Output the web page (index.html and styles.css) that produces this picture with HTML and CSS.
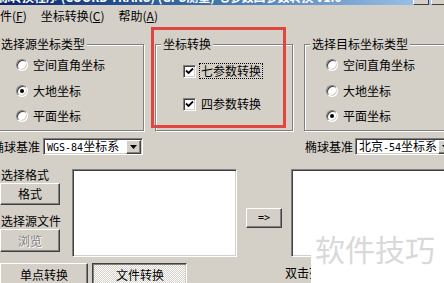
FILE: index.html
```html
<!DOCTYPE html>
<html lang="zh-CN">
<head>
<meta charset="utf-8">
<title>坐标转换</title>
<link rel="stylesheet" href="styles.css">
</head>
<body>
<div class="titlebar">
  <span class="title">坐标转换程序 (COORD TRANS) (GPS测量) 七参数四参数转换 V1.0</span>
  <div class="tbtns"><i></i><i></i></div>
</div>
<div class="menubar">
  <span>文件(<u>F</u>)</span>
  <span>坐标转换(<u>C</u>)</span>
  <span>帮助(<u>A</u>)</span>
</div>
<div class="groups">
  <fieldset class="grp grp-src">
    <legend>选择源坐标类型</legend>
    <div class="opts">
      <div class="opt"><span class="radio"></span><span class="txt">空间直角坐标</span></div>
      <div class="opt"><span class="radio on"></span><span class="txt">大地坐标</span></div>
      <div class="opt"><span class="radio"></span><span class="txt">平面坐标</span></div>
    </div>
  </fieldset>
  <fieldset class="grp grp-mid">
    <legend>坐标转换</legend>
    <div class="checks">
      <div class="chk-row"><span class="check"><svg viewBox="0 0 9 9" width="9" height="9"><path d="M1 3.5 L3.5 6 L8 1.5" fill="none" stroke="#000" stroke-width="1.8"/></svg></span><span class="clabel focus">七参数转换</span></div>
      <div class="chk-row"><span class="check"><svg viewBox="0 0 9 9" width="9" height="9"><path d="M1 3.5 L3.5 6 L8 1.5" fill="none" stroke="#000" stroke-width="1.8"/></svg></span><span class="clabel">四参数转换</span></div>
    </div>
  </fieldset>
  <fieldset class="grp grp-dst">
    <legend>选择目标坐标类型</legend>
    <div class="opts">
      <div class="opt"><span class="radio"></span><span class="txt">空间直角坐标</span></div>
      <div class="opt"><span class="radio"></span><span class="txt">大地坐标</span></div>
      <div class="opt"><span class="radio on"></span><span class="txt">平面坐标</span></div>
    </div>
  </fieldset>
</div>
<div class="highlight"></div>
<div class="ell">
  <span class="ell-lbl ell-lbl-l">椭球基准</span>
  <div class="combo"><span class="ctext"><span class="mono">WGS-84</span>坐标系</span><span class="cbtn"><svg viewBox="0 0 7 4" width="7" height="4"><path d="M0 0H7L3.5 4Z" fill="#000"/></svg></span></div>
  <span class="ell-lbl ell-lbl-r">椭球基准</span>
  <div class="combo combo-r"><span class="ctext">北京<span class="mono">-54</span>坐标系</span><span class="cbtn"><svg viewBox="0 0 7 4" width="7" height="4"><path d="M0 0H7L3.5 4Z" fill="#000"/></svg></span></div>
</div>
<div class="files">
  <div class="leftcol">
    <span class="lbl lbl-fmt">选择格式</span>
    <div class="btn btn-fmt">格式</div>
    <span class="lbl lbl-src">选择源文件</span>
    <div class="btn btn-browse disabled">浏览</div>
  </div>
  <div class="listbox list-l"></div>
  <div class="btn btn-arrow"><span class="mono">=&gt;</span></div>
  <div class="listbox list-r"></div>
</div>
<div class="bottom">
  <div class="btn btn-single">单点转换</div>
  <div class="btn btn-file pressed">文件转换</div>
  <span class="hint">双击列表查看文件</span>
</div>
<div class="watermark">软件技巧</div>
</body>
</html>
```
FILE: styles.css
```css
* { box-sizing: border-box; }
html, body { margin: 0; padding: 0; }
body {
  width: 444px;
  height: 283px;
  overflow: hidden;
  position: relative;
  background: #d4d0c8;
  color: #000;
  font-family: "Noto Sans CJK SC", "Noto Sans", sans-serif;
  font-size: 12px;
  line-height: 14px;
}
.mono { font-family: "DejaVu Sans Mono", monospace; font-size: 10px; }

/* title bar */
.titlebar {
  height: 5px;
  display: flex;
  overflow: hidden;
  background: linear-gradient(to right, #0a246a 0%, #3a6ea5 45%, #a6caf0 100%);
}
.title {
  color: #fff;
  font-weight: bold;
  white-space: nowrap;
  margin-top: -10px;
  margin-left: -14px;
}
.tbtns { margin-left: auto; display: flex; gap: 2px; margin-right: -3px; }
.tbtns i {
  width: 16px;
  height: 5px;
  background: #d4d0c8;
  border-left: 1px solid #fff;
  border-right: 1px solid #404040;
  border-bottom: 1px solid #404040;
}

/* menu */
.menubar {
  height: 20px;
  display: flex;
  gap: 14px;
  margin-left: -12px;
  padding-top: 4px;
  white-space: nowrap;
}
.menubar u { text-decoration: underline; text-underline-offset: 1px; }

/* group boxes */
.groups {
  display: flex;
  gap: 11px;
  margin-left: -7px;
  padding-top: 12px;
  white-space: nowrap;
}
.grp {
  margin: 0;
  padding: 0;
  min-width: 0;
  height: 94px;
  border: 1px solid #808080;
  box-shadow: inset 1px 1px 0 #fff, 1px 1px 0 #fff;
}
.grp legend {
  margin-left: 5px;
  padding: 0 2px;
  line-height: 14px;
  background: #d4d0c8;
}
.grp-src { width: 151px; flex: none; }
.grp-mid { width: 138px; flex: none; }
.grp-dst { width: 160px; flex: none; }

.opts {
  display: flex;
  flex-direction: column;
  gap: 11.5px;
  padding-top: 7px;
}
.grp-src .opts { padding-left: 22px; }
.grp-dst .opts { padding-left: 21px; }
.opt { display: flex; align-items: center; height: 14px; }
.radio {
  width: 12px;
  height: 12px;
  flex: none;
  border-radius: 50%;
  background: #fff;
  border: 1px solid;
  border-color: #808080 #fff #fff #808080;
  box-shadow: inset 1px 1px 0 #404040, inset -1px -1px 0 #d4d0c8;
  display: flex;
  align-items: center;
  justify-content: center;
}
.radio.on::after {
  content: "";
  width: 4px;
  height: 4px;
  border-radius: 50%;
  background: #000;
}
.txt { margin-left: 5px; }

.checks {
  display: flex;
  flex-direction: column;
  gap: 17px;
  padding-top: 12px;
  padding-left: 27px;
}
.chk-row { display: flex; align-items: center; height: 16px; }
.check {
  width: 13px;
  height: 13px;
  flex: none;
  background: #fff;
  border: 1px solid;
  border-color: #808080 #fff #fff #808080;
  box-shadow: inset 1px 1px 0 #404040, inset -1px -1px 0 #d4d0c8;
  display: flex;
  align-items: center;
  justify-content: center;
}
.clabel {
  margin-left: 3px;
  padding: 0 1px;
  line-height: 14px;
  border: 1px solid transparent;
}
.clabel.focus { border: 1px dotted #000; }

/* red annotation rectangle (overlay) */
.highlight {
  position: absolute;
  left: 151px;
  top: 27px;
  width: 135px;
  height: 101px;
  border: 3px solid #e0453f;
}

/* ellipsoid row */
.ell {
  display: flex;
  align-items: center;
  height: 17px;
  margin-top: 7px;
  white-space: nowrap;
}
.ell-lbl { width: 48px; flex: none; }
.ell-lbl-l { margin-left: -8px; }
.ell-lbl-r { margin-left: 162px; }
.combo {
  width: 100px;
  height: 17px;
  flex: none;
  margin-left: 3px;
  display: flex;
  align-items: center;
  background: #fff;
  border: 1px solid;
  border-color: #808080 #fff #fff #808080;
  box-shadow: inset 1px 1px 0 #404040, inset -1px -1px 0 #d4d0c8;
  padding: 1px;
}
.combo-r { margin-left: 2px; }
.ctext { flex: 1; padding-left: 2px; line-height: 13px; overflow: hidden; }
.cbtn {
  width: 15px;
  height: 14px;
  flex: none;
  background: #d4d0c8;
  border: 1px solid;
  border-color: #fff #404040 #404040 #fff;
  box-shadow: inset -1px -1px 0 #808080;
  display: flex;
  align-items: center;
  justify-content: center;
}

/* file area */
.files {
  display: flex;
  height: 88px;
  margin-top: 14px;
}
.leftcol {
  width: 60px;
  flex: none;
  display: flex;
  flex-direction: column;
}
.lbl { white-space: nowrap; line-height: 14px; padding-left: 1px; }
.lbl-fmt { margin-top: -1px; }
.lbl-src { margin-top: 9px; }
.btn {
  background: #d4d0c8;
  border: 1px solid;
  border-color: #fff #404040 #404040 #fff;
  box-shadow: inset -1px -1px 0 #808080;
  display: flex;
  align-items: center;
  justify-content: center;
  white-space: nowrap;
}
.btn-fmt { height: 22px; margin-top: 1px; }
.btn-browse { height: 23px; margin-top: 1px; }
.btn.disabled { color: #808080; text-shadow: 1px 1px 0 #fff; }
.listbox {
  height: 88px;
  flex: none;
  background: #fff;
  border: 1px solid;
  border-color: #808080 #fff #fff #808080;
  box-shadow: inset 1px 1px 0 #404040, inset -1px -1px 0 #d4d0c8;
}
.list-l { width: 165px; margin-left: 12px; }
.btn-arrow { width: 36px; height: 20px; flex: none; margin-left: 9px; margin-top: 39px; }
.list-r { width: 170px; margin-left: 9px; }

/* bottom row */
.bottom {
  display: flex;
  align-items: flex-start;
  margin-top: 6px;
  white-space: nowrap;
}
.btn-single { width: 88px; height: 23px; flex: none; }
.btn-file { width: 95px; height: 23px; flex: none; margin-left: 4px; }
.btn.pressed {
  border-color: #404040 #fff #fff #404040;
  box-shadow: inset 1px 1px 0 #808080, inset -1px -1px 0 #d4d0c8;
  background: repeating-conic-gradient(#fff 0 25%, #d4d0c8 0 50%) 0 0 / 2px 2px;
  padding-top: 1px;
  padding-left: 1px;
}
.hint { margin-left: 98px; margin-top: 3px; }

/* watermark overlay */
.watermark {
  position: absolute;
  left: 311px;
  top: 229px;
  width: 133px;
  height: 54px;
  background: #fff;
  color: #d9d9d9;
  font-size: 30px;
  line-height: 30px;
  padding-top: 4px;
  padding-left: 4px;
  white-space: nowrap;
}
```
